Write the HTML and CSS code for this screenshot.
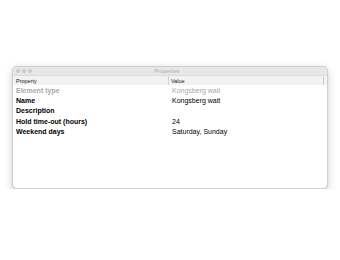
FILE: index.html
```html
<!DOCTYPE html>
<html>
	<head>
		<meta charset="utf-8" />
		<title>Properties</title>
		<link rel="stylesheet" href="styles.css">
	</head>
	<body>
		<div class="window">
			<div class="titlebar">
				<div class="lights">
					<span></span>
					<span></span>
					<span></span>
				</div>
				<div class="title">Properties</div>
			</div>
			<div class="head">
				<div class="col_prop">Property</div>
				<div class="col_val">Value</div>
				<div class="col_end"></div>
			</div>
			<ul class="rows">
				<li class="row disabled">
					<div class="col_prop">Element type</div>
					<div class="col_val">Kongsberg wait</div>
				</li>
				<li class="row">
					<div class="col_prop">Name</div>
					<div class="col_val">Kongsberg wait</div>
				</li>
				<li class="row">
					<div class="col_prop">Description</div>
					<div class="col_val"></div>
				</li>
				<li class="row">
					<div class="col_prop">Hold time-out (hours)</div>
					<div class="col_val">24</div>
				</li>
				<li class="row">
					<div class="col_prop">Weekend days</div>
					<div class="col_val">Saturday, Sunday</div>
				</li>
			</ul>
		</div>
	</body>
</html>
```

FILE: styles.css
```css
* {
	margin: 0;
	padding: 0;
}

body {
	background: #fff;
	font-family: "Liberation Sans", Arial, sans-serif;
	padding: 66px 12px 0 12px;
}

li {
	list-style: none;
}

.window {
	width: 316px;
	height: 123px;
	box-sizing: border-box;
	border: 1px solid #cfcfcf;
	border-radius: 5px;
	background: #fff;
	overflow: hidden;
	box-shadow: 0 3px 8px rgba(0, 0, 0, 0.18), 0 0 1px rgba(0, 0, 0, 0.2);
}

.titlebar {
	height: 8px;
	background: #e7e7e7;
	display: flex;
	align-items: center;
	padding: 0 3px;
}

.lights {
	display: flex;
	gap: 2px;
	width: 40px;
}

.lights span {
	width: 4px;
	height: 4px;
	border-radius: 50%;
	background: #d2d2d2;
	border: 0.5px solid #c4c4c4;
	box-sizing: border-box;
}

.title {
	flex: 1;
	text-align: center;
	font-size: 5.5px;
	color: #b0b0b0;
	margin-left: -46px;
}

.head {
	height: 9px;
	display: flex;
	align-items: center;
	background: #f2f2f2;
	border-top: 1px solid #dcdcdc;
	font-size: 5.5px;
	color: #222;
}

.head .col_prop {
	width: 152px;
	padding-left: 3px;
}

.head .col_val {
	flex: 1;
	height: 100%;
	display: flex;
	align-items: center;
	padding-left: 2px;
	border-left: 1px solid #d4d4d4;
}

.head .col_end {
	width: 2px;
	height: 8px;
	margin-right: 1px;
	border-left: 1px solid #c8c8c8;
}

.row {
	display: flex;
	height: 10.4px;
	align-items: center;
	font-size: 7px;
	color: #000;
}

.row .col_prop {
	width: 156px;
	padding-left: 3px;
	font-weight: bold;
}

.row .col_val {
	flex: 1;
}

.row.disabled {
	color: #a8a8a8;
}
```
